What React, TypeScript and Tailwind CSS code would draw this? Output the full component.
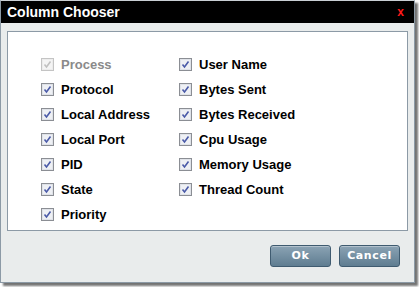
const left = ["Process", "Protocol", "Local Address", "Local Port", "PID", "State", "Priority"];
const right = ["User Name", "Bytes Sent", "Bytes Received", "Cpu Usage", "Memory Usage", "Thread Count"];

const Check = ({ disabled }: { disabled?: boolean }) => (
  <svg width="13" height="13" viewBox="0 0 13 13" className="shrink-0">
    <rect x="0.5" y="0.5" width="12" height="12" fill={disabled ? "#f4f4f4" : "#eef0f4"} stroke={disabled ? "#c4c4c4" : "#8b8e94"} />
    <rect x="1.5" y="1.5" width="10" height="10" fill="none" stroke={disabled ? "#ececec" : "#dfe2e8"} />
    <path d="M3.5 6.5 L5.5 9 L9.5 3.5" fill="none" stroke={disabled ? "#c0c0c0" : "#4a5aa8"} strokeWidth="1.6" />
  </svg>
);

const Item = ({ label, disabled }: { label: string; disabled?: boolean }) => (
  <div className="h-[25px] flex items-center gap-[7px]">
    <Check disabled={disabled} />
    <span className={`text-[13px] font-bold ${disabled ? "text-[#8a8a8a]" : "text-black"}`}>{label}</span>
  </div>
);

const Btn = ({ label }: { label: string }) => (
  <button className="w-[61px] h-[22px] rounded-[3px] border border-[#3f5b70] bg-gradient-to-b from-[#8ba3b4] to-[#5f7d91] text-white text-[11px] font-bold tracking-[0.6px] font-['DejaVu_Sans',sans-serif] shadow-[inset_0_1px_0_rgba(255,255,255,0.35)]">
    {label}
  </button>
);

export default function App() {
  return (
    <div className="w-[419px] h-[287px] bg-white font-['Liberation_Sans',Arial,sans-serif]">
      <div className="w-[415px] h-[283px] border border-[#8c9aa6] border-t-[#c9cfd4] bg-[#e9ecec] shadow-[3px_3px_2px_rgba(0,0,0,0.55)] flex flex-col">
        <div className="h-[22px] bg-black flex items-center justify-between pl-[6px] pr-[10px]">
          <span className="text-white text-[14px] font-bold">Column Chooser</span>
          <span className="text-[#ff1a1a] text-[12px] font-bold">x</span>
        </div>
        <div className="flex-1 flex flex-col px-[6px]">
          <div className="mt-[8px] h-[200px] w-[401px] bg-white border border-[#8c9aa6] pt-[20px] pl-[33px] flex">
            <div className="w-[138px] flex flex-col">
              {left.map((l, i) => (
                <Item key={l} label={l} disabled={i === 0} />
              ))}
            </div>
            <div className="flex flex-col">
              {right.map((l) => (
                <Item key={l} label={l} />
              ))}
            </div>
          </div>
          <div className="mt-[14px] flex justify-end gap-[8px] pr-[8px]">
            <Btn label="Ok" />
            <Btn label="Cancel" />
          </div>
        </div>
      </div>
    </div>
  );
}
